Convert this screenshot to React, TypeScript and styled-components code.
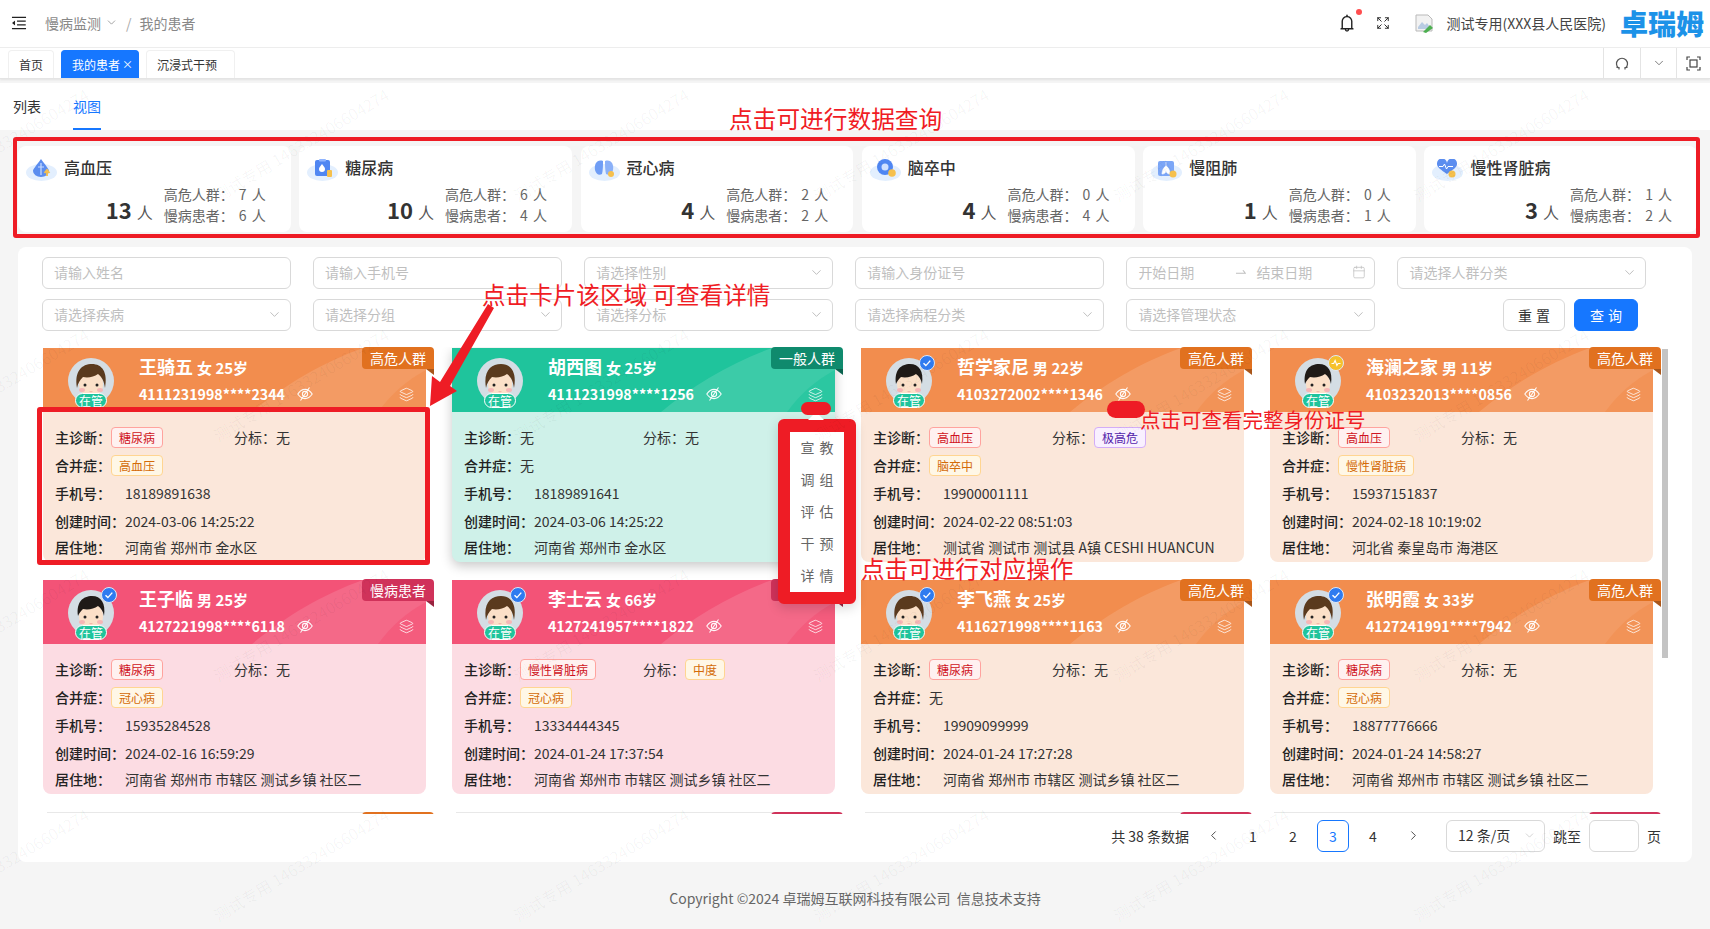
import React from 'react';
import styled, { createGlobalStyle } from 'styled-components';
import { Calendar, ChevronDown, ChevronLeft, ChevronRight, Expand, Layers } from 'lucide-react';
import { AiOutlineBell, AiOutlineMenuFold, AiOutlineSwapRight } from 'react-icons/ai';

const GlobalStyle = createGlobalStyle`
  html, body {
    margin: 0;
    padding: 0;
    background: #f5f5f5;
  }
  body {
    font-family: "Noto Sans CJK SC", "Noto Sans", sans-serif;
    font-size: 14px;
    color: #333;
  }
  * {
    box-sizing: border-box;
  }
`;

type Tone = 'orange' | 'pink' | 'green';
type TagKind = 'red' | 'amber' | 'purple';

const headColor = { orange: '#f28d4e', pink: '#f35377', green: '#1fc49c' };
const bodyColor = { orange: '#fbe7da', pink: '#fcdce3', green: '#cff1e9' };
const badgeColor = { orange: '#e1711f', pink: '#d0325a', green: '#0f8a6d' };
const foldColor = { orange: '#a9561a', pink: '#98233f', green: '#0a634e' };
const tagColors = {
  red: { bg: '#fff1f0', line: '#ffa39e', text: '#cf1322' },
  amber: { bg: '#fff7e6', line: '#ffd591', text: '#d46b08' },
  purple: { bg: '#f9f0ff', line: '#d3adf7', text: '#531dab' },
};

const Page = styled.div`
  position: relative;
  width: 1710px;
  height: 929px;
  overflow: hidden;
  background: #f5f5f5;
`;

const TopBar = styled.header`
  display: flex;
  align-items: center;
  height: 48px;
  padding: 0 6px 2px 10px;
  background: #fff;
  border-bottom: 1px solid #eee;
`;

const Crumbs = styled.div`
  display: flex;
  align-items: center;
  margin-left: 17px;
  color: #888;
`;

const CrumbSep = styled.span`
  margin: 0 8px 0 8px;
  color: #aaa;
`;

const TopRight = styled.div`
  display: flex;
  align-items: center;
  margin-left: auto;
`;

const BellWrap = styled.span`
  position: relative;
  display: flex;
  color: #222;
  font-size: 20px;

  &::after {
    content: '';
    position: absolute;
    top: -4px;
    right: -5px;
    width: 6px;
    height: 6px;
    border-radius: 50%;
    background: #ff4d4f;
  }
`;

const HospitalName = styled.span`
  margin-left: 12px;
  color: #444;
  font-size: 14px;
`;

const Logo = styled.span`
  margin-left: 14px;
  color: #1c92e8;
  font-size: 28px;
  font-weight: 900;
  line-height: 1;
`;

const TabBar = styled.nav`
  display: flex;
  align-items: flex-end;
  height: 31px;
  padding-left: 8px;
  gap: 7px;
  background: #fff;
  border-bottom: 1px solid #e4e4e4;
  box-shadow: 0 1px 2px rgba(0, 0, 0, 0.08);
`;

const PageTab = styled.div<{ $active?: boolean; $width: number }>`
  display: flex;
  align-items: center;
  width: ${(p) => p.$width}px;
  height: 28px;
  padding: 0 0 1px 10px;
  font-size: 12px;
  white-space: nowrap;
  border: 1px solid ${(p) => (p.$active ? '#1677ff' : '#f0f0f0')};
  border-bottom: none;
  border-radius: 4px 4px 0 0;
  background: ${(p) => (p.$active ? '#1677ff' : '#fff')};
  color: ${(p) => (p.$active ? '#fff' : '#333')};
`;

const TabClose = styled.span`
  margin-left: 2px;
  font-size: 11px;
`;

const TabTools = styled.div`
  display: grid;
  grid-template-columns: 37px 36px 34px;
  align-self: stretch;
  margin-left: auto;
`;

const TabTool = styled.div`
  display: flex;
  align-items: center;
  justify-content: center;
  border-left: 1px solid #e4e4e4;
  color: #555;
`;

const ViewTabs = styled.div`
  display: flex;
  gap: 32px;
  margin-top: 4px;
  padding-left: 13px;
  background: #fff;
`;

const ViewTab = styled.div<{ $active?: boolean }>`
  padding: 12px 0 11px;
  line-height: 22px;
  border-bottom: 2px solid ${(p) => (p.$active ? '#1677ff' : 'transparent')};
  color: ${(p) => (p.$active ? '#1677ff' : '#333')};
`;

const StatRow = styled.section`
  display: grid;
  grid-template-columns: repeat(6, 272.7px);
  gap: 8.6px;
  margin: 16px 0 0 18px;
`;

const StatCard = styled.div`
  height: 86px;
  padding: 9px 25px 0 8px;
  background: #fff;
  border-radius: 8px;
`;

const StatHead = styled.div`
  display: flex;
  align-items: center;
  gap: 7px;
  height: 24px;
  font-size: 16px;
  font-weight: 500;
  color: #333;
`;

const StatBottom = styled.div`
  display: flex;
  align-items: center;
  justify-content: flex-end;
  gap: 11px;
  margin-top: 5px;
`;

const StatTotal = styled.div`
  display: flex;
  align-items: baseline;
  gap: 5px;
  margin-top: 12px;
  font-size: 16px;
  color: #555;
`;

const StatNumber = styled.b`
  font-size: 22px;
  font-weight: 700;
  color: #333;
  line-height: 1;
`;

const StatLines = styled.div`
  width: 102px;
  color: #666;
`;

const StatLine = styled.div`
  display: flex;
  justify-content: space-between;
  line-height: 21px;
  white-space: nowrap;
  word-spacing: 2px;
`;

const Panel = styled.section`
  display: flex;
  flex-direction: column;
  width: 1674px;
  height: 615px;
  margin: 15px 0 0 18px;
  padding: 10px 31px 0 24px;
  background: #fff;
  border-radius: 8px;
`;

const FilterGrid = styled.div`
  display: grid;
  grid-template-columns: repeat(6, 248.5px);
  grid-auto-rows: 32px;
  gap: 10px 22.6px;
`;

const Field = styled.div`
  display: flex;
  align-items: center;
  justify-content: space-between;
  padding: 0 8px 2px 11px;
  border: 1px solid #d9d9d9;
  border-radius: 6px;
  color: #bfbfbf;
  background: #fff;
`;

const DateSide = styled.span`
  display: flex;
  align-items: center;
  gap: 8px;
`;

const FilterActions = styled.div`
  display: flex;
  justify-content: flex-end;
  gap: 9px;
  padding-right: 8px;
`;

const Button = styled.button<{ $primary?: boolean }>`
  width: ${(p) => (p.$primary ? '64px' : '62px')};
  height: 32px;
  padding: 0;
  font-family: inherit;
  font-size: 14px;
  letter-spacing: 4px;
  text-indent: 4px;
  border: 1px solid ${(p) => (p.$primary ? '#1677ff' : '#d9d9d9')};
  border-radius: 6px;
  background: ${(p) => (p.$primary ? '#1677ff' : '#fff')};
  color: ${(p) => (p.$primary ? '#fff' : '#333')};
`;

const ScrollArea = styled.div`
  position: relative;
  flex: none;
  width: 1626px;
  height: 467px;
  margin-top: 16px;
  padding: 1px 0 0 1px;
  overflow: hidden;
`;

const ScrollThumb = styled.div`
  position: absolute;
  top: 2px;
  right: 0;
  width: 6px;
  height: 309px;
  background: #c4c4c4;
`;

const CardGrid = styled.div`
  display: grid;
  grid-template-columns: repeat(4, 383px);
  grid-auto-rows: 214px;
  gap: 18px 26px;
`;

const Card = styled.article<{ $tone: Tone; $hover?: boolean }>`
  position: relative;
  border-radius: 0 0 8px 8px;
  background: ${(p) => bodyColor[p.$tone]};
  ${(p) => (p.$hover ? 'box-shadow: 0 4px 12px rgba(0, 0, 0, 0.22); z-index: 2;' : '')}
`;

const PeekCard = styled.div`
  position: relative;
  border-top: 1px solid #e8e8e8;
  margin-left: 4px;
`;

const CardHead = styled.div<{ $tone: Tone }>`
  position: relative;
  display: flex;
  height: 64px;
  padding: 6px 12px 0 25px;
  overflow: hidden;
  background: ${(p) => headColor[p.$tone]};
  color: #fff;
`;

const Swoosh = styled.svg`
  position: absolute;
  inset: 0;
  width: 100%;
  height: 100%;
`;

const Badge = styled.div<{ $tone: Tone }>`
  position: absolute;
  top: -1px;
  right: -8px;
  z-index: 1;
  display: flex;
  align-items: center;
  justify-content: center;
  width: 72px;
  height: 22px;
  padding-bottom: 1px;
  font-size: 14px;
  color: #fff;
  border-radius: 4px 4px 0 4px;
  background: ${(p) => badgeColor[p.$tone]};

  &::after {
    content: '';
    position: absolute;
    top: 22px;
    right: 0;
    border-top: 6px solid ${(p) => foldColor[p.$tone]};
    border-left: 8px solid transparent;
  }
`;

const AvatarBox = styled.div`
  position: relative;
  flex: none;
  width: 46px;
  height: 46px;
  margin: 4px 25px 0 0;
`;

const Managed = styled.span`
  position: absolute;
  left: 7px;
  top: 35px;
  display: flex;
  align-items: center;
  justify-content: center;
  width: 32px;
  height: 15px;
  font-size: 12px;
  line-height: 1;
  color: #fff;
  background: #1fc49c;
  border: 1px solid #fff;
  border-radius: 8px;
`;

const Mark = styled.svg`
  position: absolute;
  top: -3px;
  right: -3px;
  width: 16px;
  height: 16px;
`;

const HeadInfo = styled.div`
  position: relative;
  display: flex;
  flex-direction: column;
  gap: 4px;
  flex: 1;
`;

const NameLine = styled.div`
  display: flex;
  align-items: baseline;
  gap: 4px;
  height: 24px;
  line-height: 24px;
  font-size: 15px;
  font-weight: 600;
`;

const Name = styled.b`
  font-size: 18px;
  font-weight: 700;
`;

const IdLine = styled.div`
  display: flex;
  align-items: center;
  gap: 12px;
  height: 24px;
  font-size: 14.2px;
  font-weight: 700;
`;

const LayerIcon = styled(Layers)`
  position: relative;
  flex: none;
  margin-top: 33px;
`;

const CardBody = styled.div`
  display: grid;
  grid-template-rows: repeat(4, 28px) 24px;
  padding: 11px 12px 0;
  color: #333;
`;

const InfoRow = styled.div`
  display: flex;
  align-items: center;
  white-space: nowrap;
`;

const RowSide = styled.div<{ $width?: number }>`
  display: flex;
  align-items: center;
  ${(p) => (p.$width ? `width: ${p.$width}px;` : '')}
`;

const Label = styled.span<{ $width: number }>`
  flex: none;
  width: ${(p) => p.$width}px;
  font-weight: 500;
  color: #222;
`;

const PlainLabel = styled.span`
  flex: none;
  width: 42px;
  color: #333;
`;

const Tag = styled.span<{ $kind: TagKind }>`
  display: inline-flex;
  align-items: center;
  height: 21px;
  margin-top: 1px;
  padding: 0 7px;
  font-size: 12px;
  border: 1px solid ${(p) => tagColors[p.$kind].line};
  border-radius: 4px;
  background: ${(p) => tagColors[p.$kind].bg};
  color: ${(p) => tagColors[p.$kind].text};
`;

const Popover = styled.div`
  position: absolute;
  top: 71px;
  left: 326px;
  z-index: 3;
  width: 78px;
  padding: 0;
  background: #fff;
  border: solid #ee1c25;
  border-width: 13px 12.5px 12px;
  border-radius: 6px;
  box-shadow: 0 4px 12px rgba(0, 0, 0, 0.15);
`;

const PopItem = styled.div`
  height: 32px;
  line-height: 30px;
  text-align: center;
  letter-spacing: 5px;
  text-indent: 5px;
  color: #666;
`;

const Pager = styled.footer`
  display: flex;
  align-items: center;
  justify-content: flex-end;
  height: 32px;
  margin-top: 6px;
  gap: 8px;
`;

const PageCell = styled.div<{ $active?: boolean }>`
  display: flex;
  align-items: center;
  justify-content: center;
  width: 32px;
  height: 32px;
  padding-bottom: 1px;
  border: 1px solid ${(p) => (p.$active ? '#1677ff' : 'transparent')};
  border-radius: 6px;
  color: ${(p) => (p.$active ? '#1677ff' : '#333')};
`;

const PageSize = styled(Field)`
  width: 99px;
  height: 32px;
  margin-left: 9px;
  color: #333;
`;

const JumpInput = styled.div`
  width: 50px;
  height: 32px;
  border: 1px solid #d9d9d9;
  border-radius: 6px;
`;

const Footer = styled.div`
  margin-top: 26px;
  text-align: center;
  line-height: 20px;
  color: #666;
`;

const Watermarks = styled.div`
  position: absolute;
  top: -277px;
  left: -81px;
  z-index: 5;
  display: grid;
  grid-template-columns: repeat(7, 300px);
  grid-auto-rows: 240px;
  pointer-events: none;
`;

const WatermarkCell = styled.div`
  display: flex;
  align-items: flex-end;
`;

const WatermarkText = styled.span`
  font-size: 16px;
  line-height: 1;
  white-space: nowrap;
  color: rgba(0, 0, 0, 0.04);
  transform: rotate(-31deg);
  transform-origin: 0 100%;
`;

const Note = styled.div<{ $x: number; $y: number; $size: number }>`
  position: absolute;
  left: ${(p) => p.$x}px;
  top: ${(p) => p.$y}px;
  z-index: 6;
  font-size: ${(p) => p.$size}px;
  line-height: 1;
  white-space: nowrap;
  color: #f01c24;
`;

const RedFrame = styled.div<{ $x: number; $y: number; $w: number; $h: number; $line: number }>`
  position: absolute;
  left: ${(p) => p.$x}px;
  top: ${(p) => p.$y}px;
  z-index: 6;
  width: ${(p) => p.$w}px;
  height: ${(p) => p.$h}px;
  border: ${(p) => p.$line}px solid #ee1c25;
  border-radius: 3px;
`;

const RedPill = styled.div<{ $x: number; $y: number; $w: number; $h: number }>`
  position: absolute;
  left: ${(p) => p.$x}px;
  top: ${(p) => p.$y}px;
  z-index: 6;
  width: ${(p) => p.$w}px;
  height: ${(p) => p.$h}px;
  border-radius: 9px;
  background: #ee1c25;
`;

const PopArrow = styled.div`
  position: absolute;
  left: 808px;
  top: 412px;
  z-index: 5;
  border-left: 8px solid transparent;
  border-right: 8px solid transparent;
  border-bottom: 8px solid #fff;
`;

const ArrowSvg = styled.svg`
  position: absolute;
  left: 420px;
  top: 300px;
  z-index: 6;
  width: 80px;
  height: 112px;
`;

const EyeOff = () => (
  <svg width="16" height="16" viewBox="0 0 16 16" fill="none" stroke="rgba(255,255,255,0.95)" strokeWidth="1.1">
    <path d="M0.8 8C3 4.8 5.4 3.400 8 3.400S13 4.800 15.200 8C13 11.200 10.600 12.600 8 12.600S3 11.200 0.800 8Z" />
    <circle cx="8" cy="8" r="2.600" />
    <path d="M3.500 14.500L12.500 1.500" />
  </svg>
);

const Avatar = ({ male, mark }: { male?: boolean; mark?: 'blue' | 'gold' }) => (
  <AvatarBox>
    <svg width="46" height="46" viewBox="0 0 46 46">
      <circle cx="23" cy="23" r="23" fill="#d4dde4" />
      <path d="M14 38h18v8H14z" fill="#fbd9c0" />
      <ellipse cx="23" cy="26" rx="12" ry="13" fill="#fbe0c8" />
      <path
        d={
          male
            ? 'M10 26C8 12 15 6 24 6c9 0 14 7 12 20-1-5-3-8-6-10-4 3-10 4-15 3-2 2-4 4-5 7Z'
            : 'M9 30C6 13 14 6 24 6c10 0 16 8 13 24-1-7-3-11-7-14-4 3-10 4-15 3-3 3-5 6-6 11Z'
        }
        fill={male ? '#1f1a17' : '#5a3a1e'}
      />
      <circle cx="17" cy="27" r="1.5" fill="#222" />
      <circle cx="29" cy="27" r="1.5" fill="#222" />
      <ellipse cx="14" cy="32" rx="3" ry="2" fill="#f6b6b6" />
      <ellipse cx="32" cy="32" rx="3" ry="2" fill="#f6b6b6" />
      <path d="M21 33.5q2 1.6 4 0" fill="#e98f8f" />
    </svg>
    {mark && (
      <Mark viewBox="0 0 16 16">
        <circle cx="8" cy="8" r="7.5" fill={mark === 'blue' ? '#2f7bf0' : '#f6c12c'} stroke="#dfe8f5" strokeWidth="1" />
        {mark === 'blue' ? (
          <path d="M4.5 8.2l2.4 2.4 4.4-5" fill="none" stroke="#fff" strokeWidth="1.4" />
        ) : (
          <path d="M3.5 8.5h2.2l1.4-3 1.8 5 1.2-2h2.4" fill="none" stroke="#fff" strokeWidth="1.1" />
        )}
      </Mark>
    )}
    <Managed>在管</Managed>
  </AvatarBox>
);

const statShapes: Record<string, React.ReactNode> = {
  高血压: (
    <>
      <path d="M15 0C10 7 7 10 7 12a8 6 0 0 0 16 0C23 10 20 7 15 0Z" fill="#5b8def" />
      <path d="M15 4v12M12 8h6" stroke="#c9dcff" strokeWidth="1.2" />
      <path d="M21 17v-5m-2.500 2l2.500-3 2.500 3" fill="none" stroke="#f6c04d" strokeWidth="1.800" />
    </>
  ),
  糖尿病: (
    <>
      <rect x="8" y="1" width="15" height="16" rx="2" fill="#4f86f2" />
      <rect x="12" y="0" width="7" height="2.500" rx="1" fill="#8fb4ff" />
      <path d="M15 5c-2 2.500-3 3.500-3 5a3 3 0 0 0 6 0c0-1.500-1-2.500-3-5Z" fill="#fff" />
      <rect x="20" y="11" width="5" height="7" rx="1" fill="#f6c04d" />
    </>
  ),
  冠心病: (
    <>
      <path d="M14 2C8 0 5 5 6 11c1 4 4 6 7 4 1-4 1-9 1-13Z" fill="#6f9df5" />
      <path d="M16 2c6-2 9 3 8 9-1 4-4 6-7 4-1-4-1-9-1-13Z" fill="#8ab0f8" />
      <circle cx="22" cy="15" r="3" fill="#f6c04d" />
    </>
  ),
  脑卒中: (
    <>
      <circle cx="15" cy="8" r="8" fill="#4f86f2" />
      <circle cx="15" cy="8" r="3.500" fill="#cfe0ff" />
      <circle cx="22" cy="14" r="3.800" fill="#f6c04d" />
    </>
  ),
  慢阻肺: (
    <>
      <rect x="7" y="2" width="16" height="15" rx="2" fill="#7ba6f7" />
      <path d="M15 3v5M15 7c-2 1-4 4-4 8 2 0 4-1 4-4 0 3 2 4 4 4 0-4-2-7-4-8Z" fill="#fff" stroke="#fff" strokeWidth="0.6" />
      <circle cx="22" cy="15" r="3.500" fill="#f6c04d" />
    </>
  ),
  慢性肾脏病: (
    <>
      <path d="M15 15C9 11 5 8 5 5a4.500 4.500 0 0 1 10-1 4.500 4.500 0 0 1 10 1c0 3-4 6-10 10Z" fill="#5b8def" />
      <path d="M7 7.500h4l1.500-2.500 2 5 1.500-2.500h5" fill="none" stroke="#fff" strokeWidth="1" />
      <circle cx="20" cy="15" r="3.500" fill="#f6c04d" />
    </>
  ),
};

const StatIcon = ({ name }: { name: string }) => (
  <svg width="31" height="22" viewBox="0 0 31 22" style={{ marginTop: 6 }}>
    <ellipse cx="15.5" cy="13.5" rx="15.5" ry="8.500" fill="#e3effe" />
    {statShapes[name]}
  </svg>
);

const stats = [
  { name: '高血压', total: 13, high: 7, chronic: 6 },
  { name: '糖尿病', total: 10, high: 6, chronic: 4 },
  { name: '冠心病', total: 4, high: 2, chronic: 2 },
  { name: '脑卒中', total: 4, high: 0, chronic: 4 },
  { name: '慢阻肺', total: 1, high: 0, chronic: 1 },
  { name: '慢性肾脏病', total: 3, high: 1, chronic: 2 },
];

type Patient = {
  name: string;
  meta: string;
  id: string;
  tone: Tone;
  group: string;
  male?: boolean;
  mark?: 'blue' | 'gold';
  main: string;
  grade?: { text: string; kind: TagKind };
  comorbid?: string;
  phone: string;
  created: string;
  address: string;
};

const zzAddress = '河南省 郑州市 市辖区 测试乡镇 社区二';

const patients: Patient[] = [
  { name: '王骑五', meta: '女 25岁', id: '4111231998****2344', tone: 'orange', group: '高危人群', main: '糖尿病', comorbid: '高血压', phone: '18189891638', created: '2024-03-06 14:25:22', address: '河南省 郑州市 金水区' },
  { name: '胡西图', meta: '女 25岁', id: '4111231998****1256', tone: 'green', group: '一般人群', main: '', phone: '18189891641', created: '2024-03-06 14:25:22', address: '河南省 郑州市 金水区' },
  { name: '哲学家尼', meta: '男 22岁', id: '4103272002****1346', tone: 'orange', group: '高危人群', male: true, mark: 'blue', main: '高血压', grade: { text: '极高危', kind: 'purple' }, comorbid: '脑卒中', phone: '19900001111', created: '2024-02-22 08:51:03', address: '测试省 测试市 测试县 A镇 CESHI HUANCUN' },
  { name: '海澜之家', meta: '男 11岁', id: '4103232013****0856', tone: 'orange', group: '高危人群', male: true, mark: 'gold', main: '高血压', comorbid: '慢性肾脏病', phone: '15937151837', created: '2024-02-18 10:19:02', address: '河北省 秦皇岛市 海港区' },
  { name: '王子临', meta: '男 25岁', id: '4127221998****6118', tone: 'pink', group: '慢病患者', male: true, mark: 'blue', main: '糖尿病', comorbid: '冠心病', phone: '15935284528', created: '2024-02-16 16:59:29', address: zzAddress },
  { name: '李士云', meta: '女 66岁', id: '4127241957****1822', tone: 'pink', group: '慢病患者', mark: 'blue', main: '慢性肾脏病', grade: { text: '中度', kind: 'amber' }, comorbid: '冠心病', phone: '13334444345', created: '2024-01-24 17:37:54', address: zzAddress },
  { name: '李飞燕', meta: '女 25岁', id: '4116271998****1163', tone: 'orange', group: '高危人群', mark: 'blue', main: '糖尿病', phone: '19909099999', created: '2024-01-24 17:27:28', address: zzAddress },
  { name: '张明霞', meta: '女 33岁', id: '4127241991****7942', tone: 'orange', group: '高危人群', mark: 'blue', main: '糖尿病', comorbid: '冠心病', phone: '18877776666', created: '2024-01-24 14:58:27', address: zzAddress },
];

const nextRow: Tone[] = ['orange', 'pink', 'pink', 'pink'];

const filters = ['请输入姓名', '请输入手机号', '请选择性别', '请输入身份证号', '', '请选择人群分类', '请选择疾病', '请选择分组', '请选择分标', '请选择病程分类', '请选择管理状态'];
const textOnly = ['请输入姓名', '请输入手机号', '请输入身份证号'];

const PatientCard = ({ p, hover }: { p: Patient; hover?: boolean }) => (
  <Card $tone={p.tone} $hover={hover}>
    <CardHead $tone={p.tone}>
      <Swoosh viewBox="0 0 383 64" preserveAspectRatio="none">
        <path d="M209 64C240 38 280 14 320 0H383V64Z" fill="rgba(255,255,255,0.13)" />
        <path d="M335 64C348 46 364 32 383 22V64Z" fill={headColor[p.tone]} opacity="0.6" />
      </Swoosh>
      <Avatar male={p.male} mark={p.mark} />
      <HeadInfo>
        <NameLine>
          <Name>{p.name}</Name>
          {p.meta}
        </NameLine>
        <IdLine>
          {p.id}
          <EyeOff />
        </IdLine>
      </HeadInfo>
      <LayerIcon size={15} strokeWidth={1.2} />
    </CardHead>
    <Badge $tone={p.tone}>{p.group}</Badge>
    <CardBody>
      <InfoRow>
        <RowSide $width={179}>
          <Label $width={56}>主诊断：</Label>
          {p.main ? <Tag $kind="red">{p.main}</Tag> : '无'}
        </RowSide>
        <RowSide>
          <PlainLabel>分标：</PlainLabel>
          {p.grade ? <Tag $kind={p.grade.kind}>{p.grade.text}</Tag> : '无'}
        </RowSide>
      </InfoRow>
      <InfoRow>
        <Label $width={56}>合并症：</Label>
        {p.comorbid ? <Tag $kind="amber">{p.comorbid}</Tag> : '无'}
      </InfoRow>
      <InfoRow>
        <Label $width={70}>手机号：</Label>
        {p.phone}
      </InfoRow>
      <InfoRow>
        <Label $width={70}>创建时间：</Label>
        {p.created}
      </InfoRow>
      <InfoRow>
        <Label $width={70}>居住地：</Label>
        {p.address}
      </InfoRow>
    </CardBody>
    {hover && (
      <Popover>
        {['宣教', '调组', '评估', '干预', '详情'].map((item) => (
          <PopItem key={item}>{item}</PopItem>
        ))}
      </Popover>
    )}
  </Card>
);

export default function App() {
  return (
    <Page>
      <GlobalStyle />
      <TopBar>
        <AiOutlineMenuFold size={18} color="#222" />
        <Crumbs>
          慢病监测
          <ChevronDown size={13} strokeWidth={1.4} style={{ marginLeft: 4 }} />
          <CrumbSep>/</CrumbSep>
          我的患者
        </Crumbs>
        <TopRight>
          <BellWrap>
            <AiOutlineBell />
          </BellWrap>
          <Expand size={14} strokeWidth={1.6} color="#222" style={{ margin: '0 0 0 19px' }} />
          <svg width="20" height="20" viewBox="0 0 20 20" style={{ marginLeft: 24 }}>
            <path d="M2 2h12l4 4v12H2Z" fill="#f2f2f2" stroke="#b9b9b9" />
            <path d="M4 14l4-5 3 3 2-2 3 4v2H4Z" fill="#b8cbe2" />
            <path d="M9 19l7-7 3 3-7 5Z" fill="#4caf50" />
          </svg>
          <HospitalName>测试专用(XXX县人民医院)</HospitalName>
          <Logo>卓瑞姆</Logo>
        </TopRight>
      </TopBar>
      <TabBar>
        <PageTab $width={46}>首页</PageTab>
        <PageTab $active $width={78}>
          我的患者<TabClose>×</TabClose>
        </PageTab>
        <PageTab $width={89}>沉浸式干预</PageTab>
        <TabTools>
          <TabTool>
            <svg width="14" height="14" viewBox="0 0 14 14" fill="none" stroke="#555" strokeWidth="1.2">
              <path d="M3.500 12A5.500 5.500 0 1 1 10.500 12" />
              <path d="M1.500 11.500h2.500v2M12.500 11.500h-2.500v2" />
            </svg>
          </TabTool>
          <TabTool>
            <ChevronDown size={14} strokeWidth={1.3} />
          </TabTool>
          <TabTool>
            <svg width="15" height="15" viewBox="0 0 15 15" fill="none" stroke="#444" strokeWidth="1.2">
              <path d="M1 4V1h3M11 1h3v3M14 11v3h-3M4 14H1v-3" />
              <rect x="4" y="4" width="7" height="7" />
            </svg>
          </TabTool>
        </TabTools>
      </TabBar>
      <ViewTabs>
        <ViewTab>列表</ViewTab>
        <ViewTab $active>视图</ViewTab>
      </ViewTabs>
      <StatRow>
        {stats.map((s) => (
          <StatCard key={s.name}>
            <StatHead>
              <StatIcon name={s.name} />
              {s.name}
            </StatHead>
            <StatBottom>
              <StatTotal>
                <StatNumber>{s.total}</StatNumber>人
              </StatTotal>
              <StatLines>
                <StatLine>
                  <span>高危人群：</span>
                  <span>{s.high} 人</span>
                </StatLine>
                <StatLine>
                  <span>慢病患者：</span>
                  <span>{s.chronic} 人</span>
                </StatLine>
              </StatLines>
            </StatBottom>
          </StatCard>
        ))}
      </StatRow>
      <Panel>
        <FilterGrid>
          {filters.map((f, i) =>
            f === '' ? (
              <Field key={i}>
                <DateSide>
                  开始日期
                  <AiOutlineSwapRight size={14} style={{ marginLeft: 32 }} />
                  结束日期
                </DateSide>
                <Calendar size={14} strokeWidth={1.3} />
              </Field>
            ) : (
              <Field key={i}>
                {f}
                {!textOnly.includes(f) && <ChevronDown size={15} strokeWidth={1.4} color="#b5b5b5" />}
              </Field>
            ),
          )}
          <FilterActions>
            <Button>重置</Button>
            <Button $primary>查询</Button>
          </FilterActions>
        </FilterGrid>
        <ScrollArea>
          <CardGrid>
            {patients.map((p, i) => (
              <PatientCard key={p.id} p={p} hover={i === 1} />
            ))}
            {nextRow.map((tone, i) => (
              <PeekCard key={i}>
                <Badge $tone={tone} />
              </PeekCard>
            ))}
          </CardGrid>
          <ScrollThumb />
        </ScrollArea>
        <Pager>
          共 38 条数据
          <PageCell>
            <ChevronLeft size={15} strokeWidth={1.4} />
          </PageCell>
          {[1, 2, 3, 4].map((n) => (
            <PageCell key={n} $active={n === 3}>
              {n}
            </PageCell>
          ))}
          <PageCell>
            <ChevronRight size={15} strokeWidth={1.4} />
          </PageCell>
          <PageSize>
            12 条/页
            <ChevronDown size={13} strokeWidth={1.2} color="#bbb" />
          </PageSize>
          跳至
          <JumpInput />
          页
        </Pager>
      </Panel>
      <Footer>Copyright ©2024 卓瑞姆互联网科技有限公司&nbsp;&nbsp;信息技术支持</Footer>

      <Watermarks>
        {Array.from({ length: 42 }).map((_, i) => (
          <WatermarkCell key={i}>
            <WatermarkText>测试专用 146332406604274</WatermarkText>
          </WatermarkCell>
        ))}
      </Watermarks>

      <Note $x={729} $y={107} $size={23.7}>点击可进行数据查询</Note>
      <RedFrame $x={13} $y={137} $w={1687} $h={101} $line={4} />
      <Note $x={482} $y={283} $size={23.6}>点击卡片该区域 可查看详情</Note>
      <ArrowSvg viewBox="0 0 80 112">
        <path d="M68 4L74 8L30 86L37 91L10 106L12 76L20 82Z" fill="#ee1c25" />
      </ArrowSvg>
      <RedFrame $x={37} $y={407} $w={393} $h={158} $line={5} />
      <PopArrow />
      <RedPill $x={801} $y={402} $w={30} $h={13} />
      <RedPill $x={1107} $y={401} $w={38} $h={17} />
      <Note $x={1140} $y={409} $size={20.5}>点击可查看完整身份证号</Note>
      <Note $x={861} $y={557} $size={23.6}>点击可进行对应操作</Note>
    </Page>
  );
}
